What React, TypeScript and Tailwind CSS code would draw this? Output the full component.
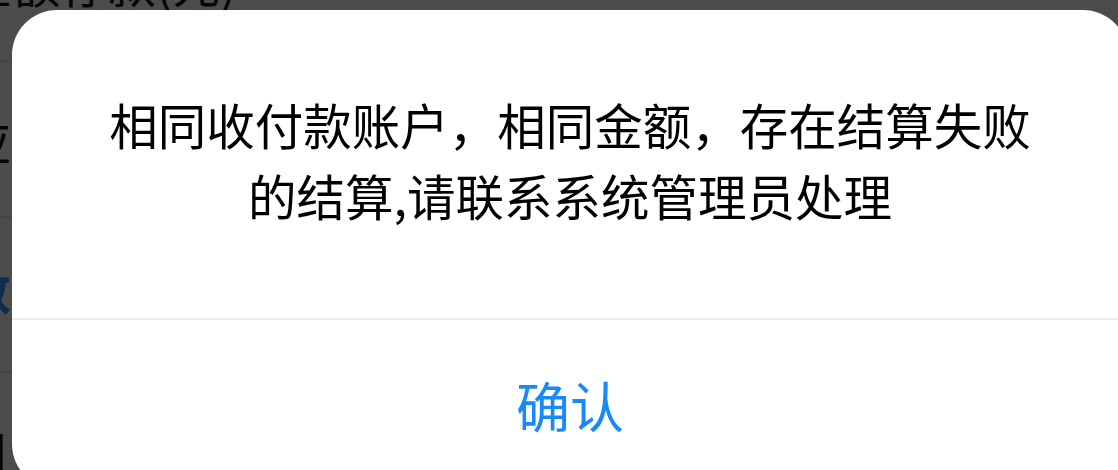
import React from 'react';

const font = { fontFamily: '"Noto Sans CJK SC", "Noto Sans", sans-serif' };

function BackgroundPage() {
  return (
    <div className="flex flex-col bg-white" style={font}>
      <div className="-mt-[93px] flex h-[155px] items-end border-b-2 border-[#e8e8e8]">
        <span className="-mb-[38px] -ml-[36px] pb-[92px] text-[48px] leading-none text-[#111]">金额存款(元)</span>
      </div>
      <div className="flex h-[156px] items-center border-b-2 border-[#e8e8e8]">
        <span className="-ml-[38px] text-[49px] leading-none text-[#111]">应</span>
      </div>
      <div className="flex h-[155px] items-center border-b-2 border-[#e8e8e8]">
        <span className="-ml-[38px] -mt-[12px] text-[49px] font-bold leading-none text-[#2f9bff]">数</span>
      </div>
      <div className="flex h-[155px] items-center">
        <span className="-ml-[38px] text-[49px] leading-none text-[#111]">日</span>
      </div>
    </div>
  );
}

function ConfirmDialog() {
  return (
    <div
      className="absolute left-[12px] top-[10px] flex w-[1116px] flex-col overflow-hidden rounded-[45px] bg-white"
      style={font}
    >
      <div className="flex h-[308px] items-center justify-center px-[80px] pb-[8px]">
        <p className="text-center text-[48.5px] leading-[71px] text-black">
          相同收付款账户，相同金额，存在结算失败的结算,请联系系统管理员处理
        </p>
      </div>
      <div className="h-[2px] bg-[#ececec]" />
      <button className="flex h-[169px] items-center justify-center text-[54px] leading-none text-[#1989fa]">
        确认
      </button>
    </div>
  );
}

export default function App() {
  return (
    <div className="relative h-[470px] w-[1118px] overflow-hidden">
      <BackgroundPage />
      <div className="absolute inset-0 bg-black/70" />
      <ConfirmDialog />
    </div>
  );
}
